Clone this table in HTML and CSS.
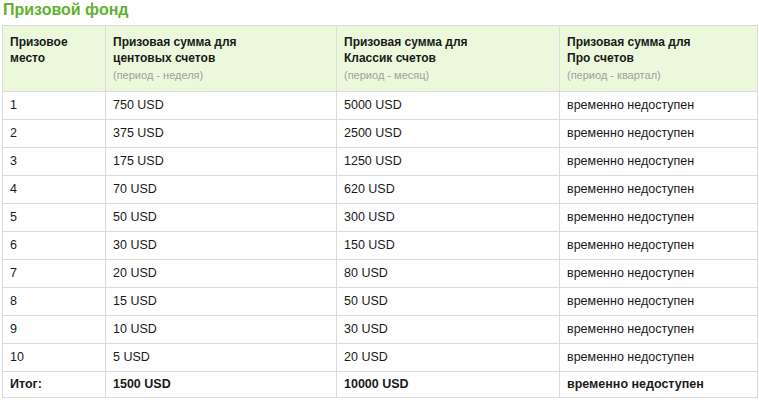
FILE: index.html
```html
<!DOCTYPE html>
<html lang="ru">
<head>
<meta charset="utf-8">
<title>Призовой фонд</title>
<link rel="stylesheet" href="styles.css">
</head>
<body>
<h2 class="title">Призовой фонд</h2>
<table class="prize">
  <colgroup>
    <col class="c1"><col class="c2"><col class="c3"><col class="c4">
  </colgroup>
  <thead>
    <tr>
      <th>Призовое<br>место</th>
      <th>Призовая сумма для<br>центовых счетов<br><span class="period">(период - неделя)</span></th>
      <th>Призовая сумма для<br>Классик счетов<br><span class="period">(период - месяц)</span></th>
      <th>Призовая сумма для<br>Про счетов<br><span class="period">(период - квартал)</span></th>
    </tr>
  </thead>
  <tbody>
    <tr><td>1</td><td>750 USD</td><td>5000 USD</td><td>временно недоступен</td></tr>
    <tr><td>2</td><td>375 USD</td><td>2500 USD</td><td>временно недоступен</td></tr>
    <tr><td>3</td><td>175 USD</td><td>1250 USD</td><td>временно недоступен</td></tr>
    <tr><td>4</td><td>70 USD</td><td>620 USD</td><td>временно недоступен</td></tr>
    <tr><td>5</td><td>50 USD</td><td>300 USD</td><td>временно недоступен</td></tr>
    <tr><td>6</td><td>30 USD</td><td>150 USD</td><td>временно недоступен</td></tr>
    <tr><td>7</td><td>20 USD</td><td>80 USD</td><td>временно недоступен</td></tr>
    <tr><td>8</td><td>15 USD</td><td>50 USD</td><td>временно недоступен</td></tr>
    <tr><td>9</td><td>10 USD</td><td>30 USD</td><td>временно недоступен</td></tr>
    <tr><td>10</td><td>5 USD</td><td>20 USD</td><td>временно недоступен</td></tr>
    <tr class="total"><td>Итог:</td><td>1500 USD</td><td>10000 USD</td><td>временно недоступен</td></tr>
  </tbody>
</table>
</body>
</html>
```

FILE: styles.css
```css
html, body {
  margin: 0;
  padding: 0;
  background: #ffffff;
}
body {
  padding: 0 2px;
  font-family: "Liberation Sans", Arial, sans-serif;
  font-size: 12px;
  color: #1a1a1a;
}
.title {
  margin: 0 0 5px 1px;
  font-size: 16px;
  line-height: 20px;
  font-weight: bold;
  color: #5fb12f;
}
.prize {
  border-collapse: collapse;
  table-layout: fixed;
  width: 755px;
}
.c1 { width: 103px; }
.c2 { width: 231px; }
.c3 { width: 223px; }
.c4 { width: 198px; }
.prize th,
.prize td {
  border: 1px solid #dcdcdc;
  text-align: left;
  vertical-align: top;
  padding: 6px 7px;
  line-height: 15px;
}
.prize td {
  font-size: 12.5px;
}
.prize th {
  background: #ebf8dc;
  font-weight: bold;
  padding: 8px 7px 8px 7px;
  line-height: 16px;
  height: 49px;
}
.period {
  display: inline-block;
  margin-top: 1px;
  font-weight: normal;
  font-size: 11px;
  color: #a0a0a0;
}
.total td {
  font-weight: bold;
  padding-top: 5px;
  padding-bottom: 5px;
}
```
